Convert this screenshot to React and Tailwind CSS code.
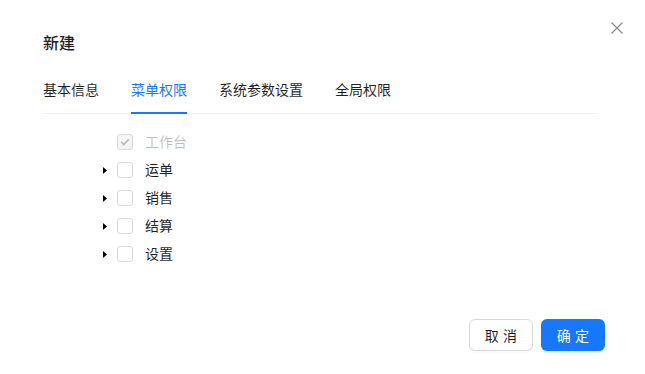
import React from 'react';

const items = [
  { label: '工作台', disabled: true, checked: true, leaf: true },
  { label: '运单' },
  { label: '销售' },
  { label: '结算' },
  { label: '设置' },
];

const tabs = ['基本信息', '菜单权限', '系统参数设置', '全局权限'];

const Check = ({ checked, disabled }) => (
  <span
    className={`w-4 h-4 rounded-[3px] border flex items-center justify-center ${
      disabled ? 'bg-[#f5f5f5] border-[#d9d9d9]' : 'bg-white border-[#d9d9d9]'
    }`}
  >
    {checked && (
      <svg width="10" height="8" viewBox="0 0 10 8" fill="none">
        <path d="M1.2 4 L3.8 6.5 L8.8 1.3" stroke="#b8b8b8" strokeWidth="1.6" />
      </svg>
    )}
  </span>
);

const App = () => {
  return (
    <div
      className="w-[645px] h-[374px] bg-white relative text-[14px] text-[rgba(0,0,0,0.88)]"
      style={{ fontFamily: '"Noto Sans", "Noto Sans CJK SC", sans-serif' }}
    >
      {/* close */}
      <button className="absolute left-[611px] top-[22px] w-3 h-3">
        <svg width="12" height="12" viewBox="0 0 12 12">
          <path d="M0.5 0.5 L11.5 11.5 M11.5 0.5 L0.5 11.5" stroke="#8c8c8c" strokeWidth="1.2" />
        </svg>
      </button>

      <div className="px-[43px] pt-[31px]">
        <h2 className="text-[16px] leading-6 font-medium text-[#1f1f1f]">新建</h2>

        {/* tabs */}
        <div className="mt-[12px] w-[554px] flex gap-8 border-b border-[#f0f0f0]">
          {tabs.map((t, i) => (
            <div
              key={t}
              className={`relative py-3 leading-[22px] ${i === 1 ? 'text-[#1677ff]' : ''}`}
            >
              {t}
              {i === 1 && <span className="absolute left-0 right-0 -bottom-px h-[2px] bg-[#1677ff]" />}
            </div>
          ))}
        </div>

        {/* tree */}
        <div className="mt-[14px] pl-[60px] flex flex-col">
          {items.map((it) => (
            <div key={it.label} className="h-7 flex items-center">
              <span className="w-[14px] flex items-center">
                {!it.leaf && (
                  <svg width="4" height="7" viewBox="0 0 4 7">
                    <path d="M0 0 L4 3.5 L0 7 Z" fill="#000" />
                  </svg>
                )}
              </span>
              <Check checked={it.checked} disabled={it.disabled} />
              <span className={`ml-3 leading-[22px] ${it.disabled ? 'text-[rgba(0,0,0,0.25)]' : ''}`}>
                {it.label}
              </span>
            </div>
          ))}
        </div>
      </div>

      {/* footer */}
      <div className="absolute left-[469px] top-[319px] flex gap-2">
        <button className="w-16 h-8 rounded-md border border-[#d9d9d9] bg-white shadow-[0_2px_0_rgba(0,0,0,0.02)] tracking-[0.3em] pl-[4px]">
          取消
        </button>
        <button className="w-16 h-8 rounded-md bg-[#1677ff] text-white shadow-[0_2px_0_rgba(5,145,255,0.1)] tracking-[0.3em] pl-[4px]">
          确定
        </button>
      </div>
    </div>
  );
};

export default App;
